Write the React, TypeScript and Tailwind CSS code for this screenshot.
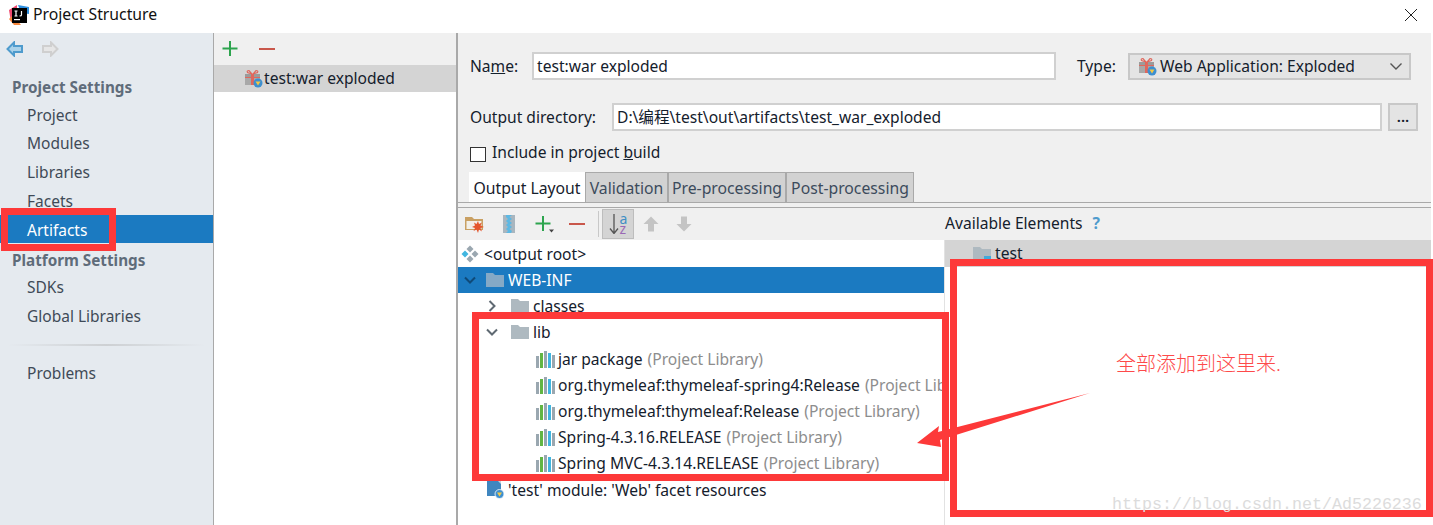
import { ReactNode } from "react";

const uiFont = "font-['Noto_Sans','Noto_Sans_CJK_SC',sans-serif]";

function AppLogo() {
  return (
    <svg width="20" height="20" viewBox="0 0 20 20" className="shrink-0">
      <path d="M0 5 L8 0 L8 10 L2 17 Z" fill="#f0476f" />
      <path d="M9 0 L20 2 L20 9 L12 8 Z" fill="#2c8fe0" />
      <path d="M0 14 L5 20 L12 20 L4 10 Z" fill="#f7873c" />
      <rect x="3" y="3" width="15" height="15" fill="#000" />
      <rect x="5" y="14" width="6" height="1.2" fill="#fff" />
      <path d="M5.5 6 H8.5 M7 6 V11 M5.5 11 H8.5 M12.5 6 V10 Q12.5 11 10.5 11" stroke="#fff" strokeWidth="1.2" fill="none" />
    </svg>
  );
}

function NavArrow({ dir, color, fill }: { dir: "left" | "right"; color: string; fill: string }) {
  return (
    <svg width="18" height="16" viewBox="0 0 18 16" className={dir === "right" ? "-scale-x-100" : ""}>
      <path d="M8 1.5 L1.5 8 L8 14.5 V11 H16 V5 H8 Z" fill={fill} stroke={color} strokeWidth="2" />
    </svg>
  );
}

function Gift() {
  return (
    <svg width="19" height="19" viewBox="0 0 19 19" className="shrink-0">
      <path d="M5 1.5 Q2.5 1.5 3.5 3.5 L8 5 Z M12 1.5 Q14.5 1.5 13.5 3.5 L9 5 Z" fill="none" stroke="#e0675c" strokeWidth="1.2" />
      <rect x="1" y="5" width="15" height="3" fill="#9b9b9b" />
      <rect x="1" y="9" width="15" height="7" fill="#a8a8a8" />
      <rect x="7" y="5" width="3" height="11" fill="#e0675c" />
      <rect x="1" y="8" width="15" height="1" fill="#e0675c" />
      <circle cx="14" cy="14" r="4.5" fill="#3d8fd0" />
      <path d="M11.5 12.5 H16.5 L14 16.5 Z" fill="#f5c842" />
    </svg>
  );
}

function Folder({ color = "#aeb9c0", badge = false }: { color?: string; badge?: boolean }) {
  return (
    <svg width="18" height="14" viewBox="0 0 18 14" className="shrink-0">
      <path d="M0 0 H7 L9 2 H18 V14 H0 Z" fill={color} />
      {badge && <rect x="11" y="9" width="7" height="5" fill="#40a9dc" />}
    </svg>
  );
}

function LibIcon() {
  return (
    <svg width="19" height="17" viewBox="0 0 19 17" className="shrink-0">
      <rect x="0" y="5" width="3" height="12" fill="#9aa7b0" />
      <rect x="4" y="2" width="3" height="15" fill="#62b543" />
      <rect x="8" y="0" width="3" height="17" fill="#9aa7b0" />
      <rect x="12" y="2" width="3" height="15" fill="#40b6e0" />
      <rect x="16" y="4" width="3" height="13" fill="#9aa7b0" />
    </svg>
  );
}

function Chevron({ open, color = "#5f6972" }: { open: boolean; color?: string }) {
  return (
    <svg width="14" height="14" viewBox="0 0 14 14" className="shrink-0">
      <path d={open ? "M2 4.5 L7 9.5 L12 4.5" : "M4.5 2 L9.5 7 L4.5 12"} fill="none" stroke={color} strokeWidth="2" />
    </svg>
  );
}

function RootIcon() {
  return (
    <svg width="18" height="18" viewBox="0 0 18 18" className="shrink-0">
      <path d="M9 0.5 L12.5 4 L9 7.5 L5.5 4 Z" fill="#9aa7b0" />
      <path d="M4 5.5 L7.5 9 L4 12.5 L0.5 9 Z" fill="#40b6e0" />
      <path d="M14 5.5 L17.5 9 L14 12.5 L10.5 9 Z" fill="#9aa7b0" />
      <path d="M9 10.5 L12.5 14 L9 17.5 L5.5 14 Z" fill="#9aa7b0" />
    </svg>
  );
}

function ModuleIcon() {
  return (
    <svg width="18" height="18" viewBox="0 0 18 18" className="shrink-0">
      <rect x="0" y="0" width="14" height="15" fill="#3f86bf" />
      <path d="M11 0 H14 V3 Z" fill="#c5d3dc" />
      <circle cx="12.5" cy="13" r="4.5" fill="#3d8fd0" stroke="#fff" strokeWidth="0.8" />
      <path d="M10 11.5 H15 L12.5 15.5 Z" fill="#f5c842" />
    </svg>
  );
}

function VArrow({ up }: { up: boolean }) {
  return (
    <svg width="16" height="16" viewBox="0 0 16 16" className={up ? "" : "rotate-180"}>
      <path d="M8 0.5 L15.5 8 H11 V15.5 H5 V8 H0.5 Z" fill="#c4c4c4" />
    </svg>
  );
}

function Plus({ dropdown = false }: { dropdown?: boolean }) {
  return (
    <svg width="18" height="18" viewBox="0 0 18 18" className="shrink-0 overflow-visible">
      <path d="M8 1 V16 M0.5 8.5 H15.5" stroke="#2da44e" strokeWidth="2" />
      {dropdown && <path d="M14 14.5 H19 L16.5 17.5 Z" fill="#444" />}
    </svg>
  );
}

function Minus() {
  return (
    <svg width="16" height="4" viewBox="0 0 16 4" className="shrink-0">
      <rect y="1" width="16" height="2" fill="#c9574b" />
    </svg>
  );
}

function SideItem({ children, active = false }: { children: ReactNode; active?: boolean }) {
  return (
    <div className={`flex h-[28.7px] items-center pl-[27px] text-[15.5px] ${active ? "bg-[#1b7ac1] pt-[4px] text-white" : "pt-[2px] text-[#3f4a57]"}`}>
      {children}
    </div>
  );
}

function SideHead({ children }: { children: ReactNode }) {
  return <div className="flex h-[29px] items-center pl-[12px] pt-[4px] text-[15.25px] font-bold text-[#5f6c7a]">{children}</div>;
}

function Tab({ label, width, active = false }: { label: string; width: string; active?: boolean }) {
  return (
    <div
      className={`flex h-[30px] items-center justify-center whitespace-nowrap pt-[3px] text-[15.75px] ${width} ${
        active ? "bg-white text-[#16202c]" : "border border-b-0 border-[#a9a9a9] bg-[#d2d2d2] text-[#3c4b5c]"
      }`}
    >
      {label}
    </div>
  );
}

function TreeRow({
  indent,
  children,
  className = "h-[26px]",
}: {
  indent: string;
  children: ReactNode;
  className?: string;
}) {
  return <div className={`flex items-center whitespace-nowrap text-[15.6px] text-[#14202c] ${indent} ${className}`}>{children}</div>;
}

function LibRow({ name, first = false }: { name: string; first?: boolean }) {
  return (
    <TreeRow indent="pl-[78px]" className={first ? "mt-[1px] h-[26px]" : "h-[26px]"}>
      <LibIcon />
      <span className="pl-[3px] pt-[2px]">{name}</span>
      <span className="ml-[5px] pt-[2px] text-[#8d8d8d]">(Project Library)</span>
    </TreeRow>
  );
}

export default function App() {
  return (
    <div className={`relative h-[525px] w-[1433px] overflow-hidden bg-white ${uiFont}`}>
      {/* title bar */}
      <div className="flex h-[33px] items-center pb-[4px] pl-[9px] pr-[15px]">
        <AppLogo />
        <span className="ml-[4px] text-[15.75px] text-[#111]">Project Structure</span>
        <svg width="14" height="14" viewBox="0 0 14 14" className="ml-auto">
          <path d="M1 1 L13 13 M13 1 L1 13" stroke="#222" strokeWidth="1" />
        </svg>
      </div>

      <div className="flex h-[492px] pr-[2px]">
        {/* sidebar */}
        <div className="w-[214px] shrink-0 border-r border-[#a9a9a9] bg-[#e5eaef]">
          <div className="flex h-[32px] items-center gap-[17px] pl-[6px]">
            <NavArrow dir="left" color="#4e9bcd" fill="#a9d2ea" />
            <NavArrow dir="right" color="#cfcfcf" fill="#e6e6e6" />
          </div>
          <div className="mt-[6px]">
            <SideHead>Project Settings</SideHead>
            <SideItem>Project</SideItem>
            <SideItem>Modules</SideItem>
            <SideItem>Libraries</SideItem>
            <SideItem>Facets</SideItem>
            <SideItem active>Artifacts</SideItem>
            <SideHead>Platform Settings</SideHead>
            <SideItem>SDKs</SideItem>
            <SideItem>Global Libraries</SideItem>
            <div className="mx-[8px] mt-[14px] h-[2px] bg-gradient-to-r from-transparent via-[#cdd0d3] to-transparent" />
            <div className="mt-[12px]">
              <SideItem>Problems</SideItem>
            </div>
          </div>
        </div>

        {/* artifact list */}
        <div className="w-[244px] shrink-0 border-r-2 border-[#a9a9a9]">
          <div className="flex h-[32px] items-center gap-[19px] bg-[#f0f0f0] pl-[8px]">
            <Plus />
            <Minus />
          </div>
          <div className="flex h-[27px] items-center bg-[#d4d4d4] pl-[30px] text-[15.6px] text-[#14202c]">
            <Gift />
            <span className="ml-[1px]">test:war exploded</span>
          </div>
        </div>

        {/* editor */}
        <div className="flex min-w-0 flex-1 flex-col bg-[#f0f0f0]">
          <div className="mt-[19px] flex h-[28px] items-center pl-[12px] text-[15.6px] text-[#14202c]">
            <span className="w-[62px] pt-[2px]">
              Na<u>m</u>e:
            </span>
            <div className="flex h-[28px] w-[524px] items-center border-2 border-[#d0d0d0] bg-white pl-[3px] pt-[2px]">test:war exploded</div>
            <span className="ml-[21px] w-[51px] pt-[2px]">Type:</span>
            <div className="flex h-[27px] w-[283px] items-center border-2 border-[#c8c8c8] bg-[#e4e4e4] pl-[8px] pr-[6px]">
              <Gift />
              <span className="ml-[3px] pt-[2px]">Web Application: Exploded</span>
              <svg width="14" height="14" viewBox="0 0 14 14" className="ml-auto">
                <path d="M1.5 4.5 L7 10 L12.5 4.5" fill="none" stroke="#555" strokeWidth="1.4" />
              </svg>
            </div>
          </div>

          <div className="mt-[23px] flex h-[28px] items-center pl-[12px] text-[15.6px] text-[#14202c]">
            <span className="w-[142px] pt-[2px]">Output directory:</span>
            <div className="flex h-[28px] w-[770px] items-center border-2 border-[#d0d0d0] bg-white pl-[3px] pt-[2px]">
              D:\编程\test\out\artifacts\test_war_exploded
            </div>
            <div className="ml-[6px] flex h-[28px] w-[30px] items-center justify-center border-2 border-[#c8c8c8] bg-[#e4e4e4] pb-[2px] text-[15px] font-semibold">
              ...
            </div>
          </div>

          <div className="mt-[16px] flex h-[15px] items-center pl-[12px] text-[15.6px] text-[#14202c]">
            <div className="h-[15px] w-[16px] border border-[#333] bg-white" />
            <span className="ml-[6px] -translate-y-[2px]">
              Include in project <u>b</u>uild
            </span>
          </div>

          <div className="mt-[10px] flex pl-[11px]">
            <Tab label="Output Layout" width="w-[116px]" active />
            <Tab label="Validation" width="w-[83px]" />
            <Tab label="Pre-processing" width="w-[118px]" />
            <Tab label="Post-processing" width="w-[128px]" />
          </div>
          <div className="h-[1px] bg-[#a9a9a9]" />
          <div className="mt-[4px] h-[1px] bg-[#a9a9a9]" />

          {/* output layout toolbar */}
          <div className="flex h-[32px] items-center">
            <svg width="20" height="17" viewBox="0 0 20 17" className="ml-[7px] shrink-0">
              <path d="M0 1 H7 L9 3 H18 V14 H0 Z" fill="#c9a063" />
              <rect x="1.5" y="5" width="15" height="8" fill="#f2efe8" />
              <path d="M13 5 L14 8 L17 6.5 L15.5 9.5 L19 11 L15.5 12 L17 15.5 L14 13.5 L13 17 L11.5 13.5 L8.5 15 L10 12 L7 11 L10 9.5 L9 6.5 L11.5 8 Z" fill="#e4572e" />
            </svg>
            <svg width="12" height="18" viewBox="0 0 12 18" className="ml-[18px] shrink-0">
              <rect width="12" height="18" fill="#a9b6bf" />
              <path d="M3 0 H9 L6.5 2 L9 4 L6.5 6 L9 8 L6.5 10 L9 12 L6.5 14 L9 16 L8 18 H3 L5 16 L3 14 L5 12 L3 10 L5 8 L3 6 L5 4 L3 2 Z" fill="#5cb8e4" />
            </svg>
            <div className="ml-[20px] shrink-0">
              <Plus dropdown />
            </div>
            <div className="ml-[16px]">
              <Minus />
            </div>
            <div className="ml-[13px] h-[26px] w-[1px] bg-[#c8c8c8]" />
            <div className="ml-[3px] flex h-[30px] w-[32px] items-center justify-center gap-[1px] border border-[#bdbdbd] bg-[#d4d4d4]">
              <svg width="10" height="20" viewBox="0 0 10 20" className="shrink-0">
                <path d="M5 0 V19 M1 14.5 L5 19.5 L9 14.5" fill="none" stroke="#555" strokeWidth="1.3" />
              </svg>
              <div className="flex flex-col text-[14px] leading-[10px]">
                <span className="h-[10px] text-[#3f8fc4]">a</span>
                <span className="h-[10px] text-[#9a68b5]">z</span>
              </div>
            </div>
            <div className="ml-[9px]">
              <VArrow up />
            </div>
            <div className="ml-[17px]">
              <VArrow up={false} />
            </div>
            <div className="ml-[253px] flex items-center text-[15.6px] text-[#14202c]">
              Available Elements
              <span className="ml-[10px] font-bold text-[#4e9bcd]">?</span>
            </div>
          </div>

          {/* trees */}
          <div className="flex min-h-0 flex-1">
            <div className="w-[487px] shrink-0 overflow-hidden border-r border-[#e2e2e2] bg-white">
              <TreeRow indent="pl-[3px]" className="h-[27px]">
                <RootIcon />
                <span className="ml-[5px] pt-[2px]">&lt;output root&gt;</span>
              </TreeRow>
              <div className="flex h-[26px] items-center bg-[#1b7ac1] pl-[5px] text-[15.6px] text-white">
                <Chevron open color="#0f4a78" />
                <div className="ml-[9px]">
                  <Folder color="#84a9c6" />
                </div>
                <span className="ml-[4px] pt-[2px]">WEB-INF</span>
              </div>
              <TreeRow indent="pl-[27px]">
                <Chevron open={false} />
                <div className="ml-[12px]">
                  <Folder />
                </div>
                <span className="ml-[4px] pt-[2px]">classes</span>
              </TreeRow>
              <TreeRow indent="pl-[27px]">
                <Chevron open />
                <div className="ml-[12px]">
                  <Folder />
                </div>
                <span className="ml-[4px] pt-[2px]">lib</span>
              </TreeRow>
              <LibRow name="jar package" first />
              <LibRow name="org.thymeleaf:thymeleaf-spring4:Release" />
              <LibRow name="org.thymeleaf:thymeleaf:Release" />
              <LibRow name="Spring-4.3.16.RELEASE" />
              <LibRow name="Spring MVC-4.3.14.RELEASE" />
              <TreeRow indent="pl-[29px]" className="h-[27px]">
                <ModuleIcon />
                <span className="ml-[3px] pt-[2px]">'test' module: 'Web' facet resources</span>
              </TreeRow>
            </div>
            <div className="min-w-0 flex-1 bg-white">
              <div className="flex h-[27px] items-center bg-[#d4d4d4] pl-[28px] text-[15.6px] text-[#14202c]">
                <Folder badge />
                <span className="ml-[4px]">test</span>
              </div>
            </div>
          </div>
        </div>
      </div>

      {/* annotations drawn on top of the screenshot */}
      <div className="absolute left-[1px] top-[208px] h-[43px] w-[115px] border-[7px] border-[#fd3939]" />
      <div className="absolute left-[472px] top-[312px] h-[169px] w-[477px] border-[7px] border-[#fd3939]" />
      <div className="absolute left-[950px] top-[259px] h-[258px] w-[483px] border-[7px] border-[#fd3939]" />
      <svg width="190" height="70" viewBox="0 0 190 70" className="absolute left-[910px] top-[385px]">
        <path d="M180 8 L28 47 L29 41 L7 58 L31 62 L30 55 Z" fill="#fd3939" />
      </svg>
      <div className="absolute left-[1116px] top-[351px] whitespace-nowrap text-[20px] font-light leading-[26px] text-[#fd4a4a]">
        全部添加到这里来.
      </div>
      <div className="absolute left-[1112px] top-[495px] whitespace-nowrap font-['Liberation_Mono',monospace] text-[16.67px] leading-[20px] text-[#dcdcdc]">
        https://blog.csdn.net/Ad5226236
      </div>
    </div>
  );
}
